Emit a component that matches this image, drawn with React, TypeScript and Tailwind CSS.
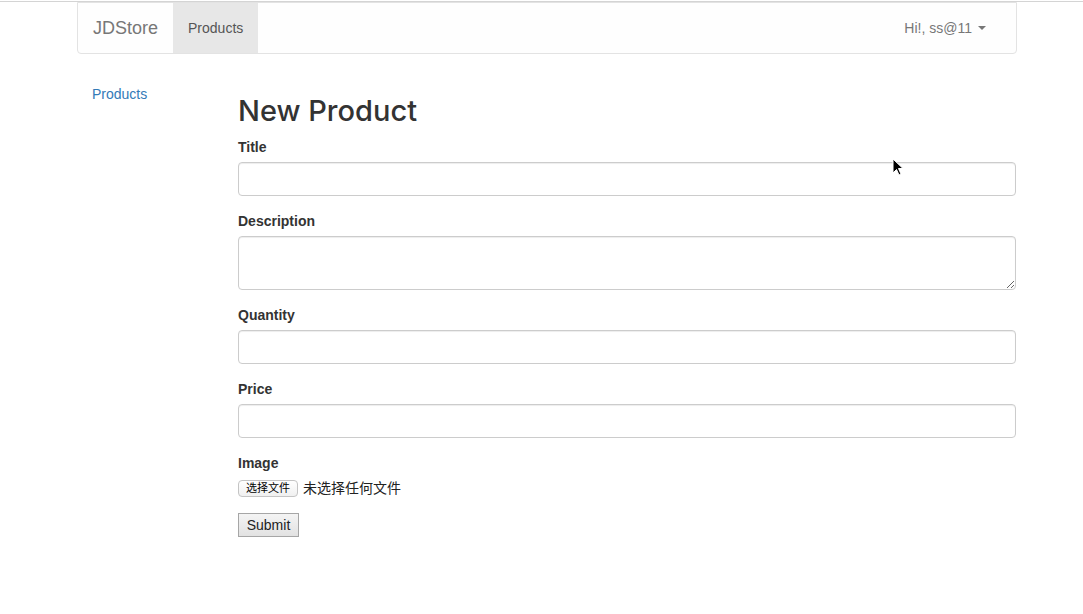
import React from 'react';

const font = { fontFamily: '"Liberation Sans", "Noto Sans CJK SC", Arial, sans-serif' };

function Field({ label, children }: { label: string; children: React.ReactNode }) {
  return (
    <div className="mb-[15px]">
      <label className="block mb-[5px] text-[14px] leading-[20px] font-bold text-[#333]">{label}</label>
      {children}
    </div>
  );
}

function App() {
  const inputCls =
    'block w-full h-[34px] px-3 border border-[#ccc] rounded-[4px] bg-white shadow-[inset_0_1px_1px_rgba(0,0,0,0.075)] outline-none';

  return (
    <div className="relative min-h-screen bg-white text-[#333] text-[14px] leading-[20px]" style={font}>
      <div className="mt-px h-px bg-[#d4d4d4]" />

      <div className="w-[940px] ml-[77px]">
        {/* navbar */}
        <nav className="flex items-stretch h-[52px] border border-[#e3e3e3] rounded-b-[4px] bg-[#fefefe]">
          <a className="flex items-center px-[15px] text-[18px] text-[#777]">JDStore</a>
          <a className="flex items-center px-[15px] bg-[#e7e7e7] text-[#555]">Products</a>
          <div className="ml-auto flex items-center pl-[15px] pr-[30px] text-[#777]">
            <span>Hi!, ss@11</span>
            <span className="ml-[6px] w-0 h-0 border-l-[4px] border-r-[4px] border-t-[4px] border-l-transparent border-r-transparent border-t-[#777]" />
          </div>
        </nav>

        <div className="flex mt-[20px]">
          {/* sidebar */}
          <div className="w-[161px] shrink-0 pl-[15px] pt-[10px]">
            <a className="text-[#337ab7]">Products</a>
          </div>

          {/* main */}
          <div className="w-[778px]">
            <h2
              className="mt-[20px] mb-[10px] text-[29px] leading-[33px] font-medium"
              style={{ fontFamily: 'Inter, "Liberation Sans", sans-serif' }}
            >
              New Product
            </h2>

            <Field label="Title">
              <input className={inputCls} />
            </Field>

            <Field label="Description">
              <textarea className="block w-full h-[54px] px-3 py-[6px] border border-[#ccc] rounded-[4px] bg-white shadow-[inset_0_1px_1px_rgba(0,0,0,0.075)] outline-none" />
            </Field>

            <Field label="Quantity">
              <input className={inputCls} />
            </Field>

            <Field label="Price">
              <input className={inputCls} />
            </Field>

            <div className="mb-[15px]">
              <label className="block mb-[5px] text-[14px] leading-[20px] font-bold">Image</label>
              <div className="flex items-center gap-[5px]">
                <span className="inline-flex items-center h-[17px] px-[7px] border border-[#c4c4c4] rounded-[4px] bg-gradient-to-b from-white to-[#f0f0f0] text-[11px] text-black leading-none">
                  选择文件
                </span>
                <span className="text-[14px] text-[#222]">未选择任何文件</span>
              </div>
            </div>

            <button className="h-[24px] w-[61px] border border-[#a6a6a6] bg-gradient-to-b from-[#f4f4f4] to-[#e2e2e2] text-[14px] text-[#222] leading-none">
              Submit
            </button>
          </div>
        </div>
      </div>

      {/* mouse pointer */}
      <svg className="absolute left-[892px] top-[157px]" width="12" height="19" viewBox="0 0 12 19">
        <path d="M1 1 L1 15 L4.5 11.5 L7 17 L9 16 L6.5 10.5 L11 10.5 Z" fill="#000" stroke="#fff" strokeWidth="1" />
      </svg>
    </div>
  );
}

export default App;
